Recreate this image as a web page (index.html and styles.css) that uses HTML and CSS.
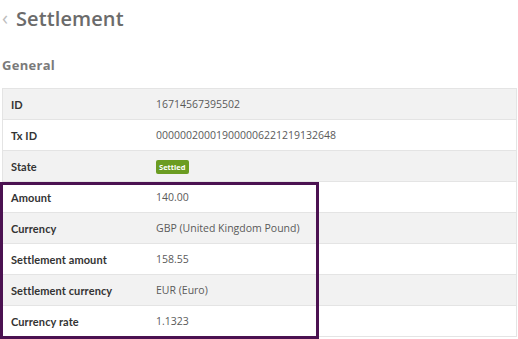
FILE: index.html
```html
<!DOCTYPE html>
<html>
<head>
<meta charset="utf-8">
<link rel="stylesheet" href="styles.css">
</head>
<body>
<div class="page">
  <div class="header">
    <span class="back">&lsaquo;</span>
    <h1 class="title">Settlement</h1>
  </div>
  <h2 class="section">General</h2>
  <div class="table">
    <div class="row alt"><div class="label">ID</div><div class="value">16714567395502</div></div>
    <div class="row"><div class="label">Tx ID</div><div class="value">000000200019000006221219132648</div></div>
    <div class="row alt"><div class="label">State</div><div class="value"><span class="badge">Settled</span></div></div>
    <div class="row"><div class="label">Amount</div><div class="value">140.00</div></div>
    <div class="row alt"><div class="label">Currency</div><div class="value">GBP (United Kingdom Pound)</div></div>
    <div class="row"><div class="label">Settlement amount</div><div class="value">158.55</div></div>
    <div class="row alt"><div class="label">Settlement currency</div><div class="value">EUR (Euro)</div></div>
    <div class="row"><div class="label">Currency rate</div><div class="value">1.1323</div></div>
    <div class="highlight"></div>
  </div>
</div>
</body>
</html>
```
FILE: styles.css
```css
html, body { margin: 0; padding: 0; background: #fff; }
body { font-family: "Open Sans", "Liberation Sans", sans-serif; color: #444; }
.page { width: 518px; height: 339px; overflow: hidden; }
.header { display: flex; align-items: center; height: 38px; padding-left: 2px; }
.back { color: #bdbdbd; font-size: 20px; font-weight: 400; width: 14px; line-height: 20px; margin-top: -2px; }
.title { margin: 0; font-size: 20px; font-weight: 600; color: #6b6b6b; letter-spacing: 0.1px; line-height: 24px; }
.section { margin: 17px 0 0 2px; font-size: 13px; font-weight: 700; color: #7a7a7a; line-height: 20px; height: 33px; letter-spacing: 0.3px; }
.table { position: relative; margin-left: 2px; width: 513px; border: 1px solid #e4e4e4; border-bottom: none; }
.row { display: flex; align-items: center; height: 30px; border-bottom: 1px solid #e4e4e4; background: #fff; font-size: 10.5px; }
.row.alt { background: #f2f2f2; }
.label { width: 145px; padding-left: 8px; font-family: Lato, "Open Sans", sans-serif; font-weight: 700; font-size: 11px; color: #333; letter-spacing: 0.1px; }
.value { color: #5a5a5a; }
.badge { display: inline-block; background: #6b9c22; color: #fff; font-size: 7.5px; font-weight: 700; padding: 1px 3px; border-radius: 2px; line-height: 12px; }
.highlight { position: absolute; left: -3px; top: 93px; width: 313px; height: 151px; border: 3px solid #4b1251; }
```
